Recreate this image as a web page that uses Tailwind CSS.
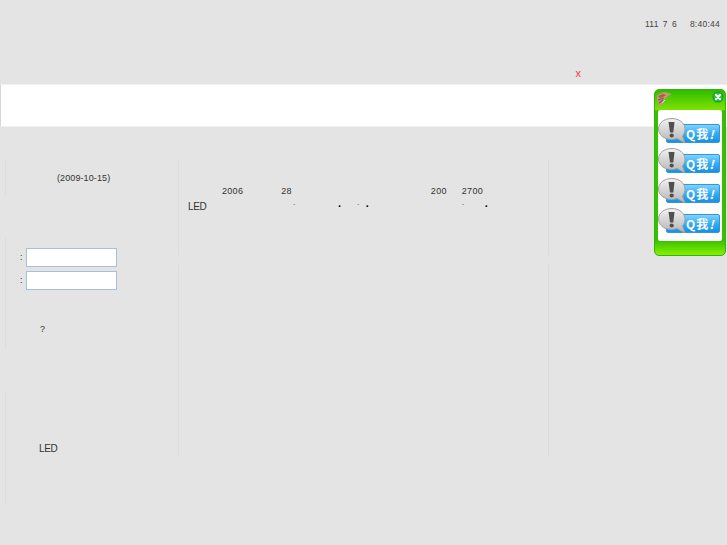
<!DOCTYPE html>
<html lang="en">

<head>
    <meta charset="UTF-8">
    <meta name="viewport" content="width=device-width, initial-scale=1.0">
    <script src="https://cdn.jsdelivr.net/npm/@tailwindcss/browser@4"></script>
    <title>LED</title>
</head>

<body class="relative w-[727px] h-[545px] overflow-hidden bg-[#e4e4e4] font-['Liberation_Sans',sans-serif] text-[9px] tracking-[0.1px] text-[#333]">
    <!-- top -->
    <div class="h-[84px] flex flex-col items-end pr-[7px] pt-[18px]">
        <div class="flex gap-[13px] leading-[12px] text-[8.5px] tracking-[0.25px] [word-spacing:1.5px] text-[#444]">
            <span>111 7 6</span>
            <span>8:40:44</span>
        </div>
        <div class="mt-[37px] mr-[139px] text-[11px] leading-[13px] text-[#f04040]">x</div>
    </div>

    <!-- banner -->
    <div class="h-[43px] bg-white border-l border-[#d8d8d8] border-y-[#f0f0f0] border-y"></div>

    <!-- columns -->
    <div class="flex mt-[33px] ml-[5px]">
        <div class="w-[173px] shrink-0">
            <div class="h-[35px] border-l border-[#dcdcdc] pl-[51px] pt-[12px] leading-[12px]">(2009-10-15)</div>
            <div class="mt-[43px] h-[112px] border-l border-[#dcdcdc] pt-[10px]">
                <div class="flex flex-col gap-[4px]">
                    <div class="flex items-center pl-[14px] gap-[4px]">
                        <span class="w-[2px]">:</span>
                        <input type="text" class="w-[91px] h-[19px] bg-white border border-[#a9bfd6]">
                    </div>
                    <div class="flex items-center pl-[14px] gap-[4px]">
                        <span class="w-[2px]">:</span>
                        <input type="text" class="w-[91px] h-[19px] bg-white border border-[#a9bfd6]">
                    </div>
                </div>
                <div class="pl-[34px] mt-[33px] leading-[12px]">?</div>
            </div>
            <div class="mt-[42px] h-[113px] border-l border-[#dcdcdc] pl-[33px] pt-[51px] text-[10px] tracking-[-0.4px] leading-[12px]">LED</div>
        </div>

        <div class="w-[371px] shrink-0">
            <div class="h-[95px] border-x border-[#dcdcdc] pl-[9px] pt-[25px]">
                <div class="flex leading-[12px] pl-[34px] tracking-[0.3px]">
                    <span>2006</span>
                    <span class="ml-[38px]">28</span>
                    <span class="ml-[139px]">200</span>
                    <span class="ml-[15px]">2700</span>
                </div>
                <div class="flex leading-[12px] mt-[4px] text-[10px] tracking-[-0.4px]">
                    <span>LED</span>
                    <span class="ml-[87px] mt-[1px] text-[6px] leading-[8px]">“</span>
                    <span class="ml-[43px] mt-[1px] text-[11px] leading-[8px] font-bold text-black">·</span>
                    <span class="ml-[16px] mt-[1px] text-[6px] leading-[8px]">“</span>
                    <span class="ml-[7px] mt-[1px] text-[11px] leading-[8px] font-bold text-black">·</span>
                    <span class="ml-[93px] mt-[1px] text-[6px] leading-[8px]">“</span>
                    <span class="ml-[21px] mt-[1px] text-[11px] leading-[8px] font-bold text-black">·</span>
                </div>
            </div>
            <div class="mt-[10px] h-[192px] border-x border-[#dcdcdc]"></div>
        </div>
    </div>

    <!-- floating qq panel -->
    <div class="absolute left-[654px] top-[89px] w-[72px] h-[167px] flex flex-col rounded-[5px] border border-[#2fb50c] bg-[linear-gradient(to_bottom,#2fbb00_0,#7ee200_12%,#36c000_12.5%,#36c000_91%,#88f000_100%)] px-[3px] pt-[20px]">
        <svg class="absolute left-[1px] top-px" width="17" height="16" viewBox="0 0 17 16">
            <path d="M1 4 L8 1 L16 3 L12 5 L9 8 L6 15 L3 14 L1 10 Z" fill="#c8967a" />
            <path d="M2 5 L7 3 L10 4 L7 6 L4 7 Z" fill="#a5613f" />
            <path d="M2 9 L8 7 M3 12 L7 9" stroke="#7d5a4c" stroke-width="1.3" fill="none" />
            <path d="M6 12 L9 9" stroke="#e9e2d8" stroke-width="1" />
        </svg>
        <svg class="absolute right-[1px] top-[1px]" width="12" height="12" viewBox="0 0 12 12">
            <circle cx="6" cy="6" r="5.5" fill="#12a02c" />
            <circle cx="6" cy="6" r="4.2" fill="#2cc24a" />
            <path d="M3.8 3.8 L8.2 8.2 M8.2 3.8 L3.8 8.2" stroke="#fff" stroke-width="2" stroke-linecap="round" />
        </svg>

        <div class="w-[64px] h-[131px] bg-white rounded-[2px] flex flex-col pt-[8px]">
            <div class="relative h-[30px] shrink-0 pl-[8px] pt-[6px]">
                <div class="w-[54px] h-[19px] rounded-[2px] border border-[#2a9be2] bg-gradient-to-b from-[#7fd2fd] via-[#35adf2] to-[#1c8fe0] pl-[19px] text-white font-bold text-[12px] leading-[17px] font-['Noto_Sans_CJK_SC',sans-serif] tracking-[1px] whitespace-nowrap">Q我<i>!</i></div>
                <svg class="absolute left-0 top-0" width="29" height="26" viewBox="0 0 29 26">
                    <defs>
                        <linearGradient id="bubble" x1="0" y1="0" x2="0" y2="1">
                            <stop offset="0" stop-color="#f2f2f2" />
                            <stop offset="1" stop-color="#b4b4b4" />
                        </linearGradient>
                    </defs>
                    <path d="M14 0.5 C21 0.5 27 5 27 11 C27 14 26 16 24.5 18 L27 25 L19 20.5 C17 21 15.5 21.5 14 21.5 C6 21.5 0.5 17 0.5 11 C0.5 5 6 0.5 14 0.5 Z" fill="url(#bubble)" stroke="#a0a0a0" />
                    <path d="M10.5 4 L16.5 4 L15.3 14.5 L12 14.5 Z" fill="#505050" />
                    <circle cx="13.7" cy="17.5" r="2.1" fill="#505050" />
                </svg>
            </div>
            <div class="relative h-[30px] shrink-0 pl-[8px] pt-[6px]">
                <div class="w-[54px] h-[19px] rounded-[2px] border border-[#2a9be2] bg-gradient-to-b from-[#7fd2fd] via-[#35adf2] to-[#1c8fe0] pl-[19px] text-white font-bold text-[12px] leading-[17px] font-['Noto_Sans_CJK_SC',sans-serif] tracking-[1px] whitespace-nowrap">Q我<i>!</i></div>
                <svg class="absolute left-0 top-0" width="29" height="26" viewBox="0 0 29 26">
                    <path d="M14 0.5 C21 0.5 27 5 27 11 C27 14 26 16 24.5 18 L27 25 L19 20.5 C17 21 15.5 21.5 14 21.5 C6 21.5 0.5 17 0.5 11 C0.5 5 6 0.5 14 0.5 Z" fill="url(#bubble)" stroke="#a0a0a0" />
                    <path d="M10.5 4 L16.5 4 L15.3 14.5 L12 14.5 Z" fill="#505050" />
                    <circle cx="13.7" cy="17.5" r="2.1" fill="#505050" />
                </svg>
            </div>
            <div class="relative h-[30px] shrink-0 pl-[8px] pt-[6px]">
                <div class="w-[54px] h-[19px] rounded-[2px] border border-[#2a9be2] bg-gradient-to-b from-[#7fd2fd] via-[#35adf2] to-[#1c8fe0] pl-[19px] text-white font-bold text-[12px] leading-[17px] font-['Noto_Sans_CJK_SC',sans-serif] tracking-[1px] whitespace-nowrap">Q我<i>!</i></div>
                <svg class="absolute left-0 top-0" width="29" height="26" viewBox="0 0 29 26">
                    <path d="M14 0.5 C21 0.5 27 5 27 11 C27 14 26 16 24.5 18 L27 25 L19 20.5 C17 21 15.5 21.5 14 21.5 C6 21.5 0.5 17 0.5 11 C0.5 5 6 0.5 14 0.5 Z" fill="url(#bubble)" stroke="#a0a0a0" />
                    <path d="M10.5 4 L16.5 4 L15.3 14.5 L12 14.5 Z" fill="#505050" />
                    <circle cx="13.7" cy="17.5" r="2.1" fill="#505050" />
                </svg>
            </div>
            <div class="relative h-[30px] shrink-0 pl-[8px] pt-[6px]">
                <div class="w-[54px] h-[19px] rounded-[2px] border border-[#2a9be2] bg-gradient-to-b from-[#7fd2fd] via-[#35adf2] to-[#1c8fe0] pl-[19px] text-white font-bold text-[12px] leading-[17px] font-['Noto_Sans_CJK_SC',sans-serif] tracking-[1px] whitespace-nowrap">Q我<i>!</i></div>
                <svg class="absolute left-0 top-0" width="29" height="26" viewBox="0 0 29 26">
                    <path d="M14 0.5 C21 0.5 27 5 27 11 C27 14 26 16 24.5 18 L27 25 L19 20.5 C17 21 15.5 21.5 14 21.5 C6 21.5 0.5 17 0.5 11 C0.5 5 6 0.5 14 0.5 Z" fill="url(#bubble)" stroke="#a0a0a0" />
                    <path d="M10.5 4 L16.5 4 L15.3 14.5 L12 14.5 Z" fill="#505050" />
                    <circle cx="13.7" cy="17.5" r="2.1" fill="#505050" />
                </svg>
            </div>
        </div>
    </div>
</body>

</html>
